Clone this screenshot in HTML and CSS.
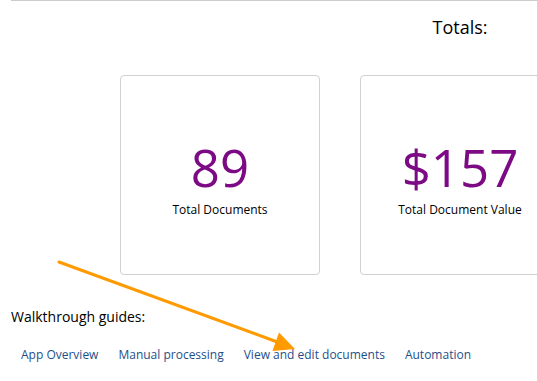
FILE: index.html
```html
<!DOCTYPE html>
<html lang="en">
<head>
    <meta charset="UTF-8">
    <meta name="viewport" content="width=device-width, initial-scale=1.0">
    <title>Dashboard</title>
    <link rel="stylesheet" href="styles.css">
</head>
<body>
    <div class="page">
        <div class="totals">
            <h2 class="totals-title">Totals:</h2>
            <div class="cards">
                <div class="card">
                    <div class="card-value">89</div>
                    <div class="card-label">Total Documents</div>
                </div>
                <div class="card">
                    <div class="card-value">$157</div>
                    <div class="card-label">Total Document Value</div>
                </div>
            </div>
        </div>

        <div class="guides">
            <h3 class="guides-title">Walkthrough guides:</h3>
            <div class="guide-links">
                <a href="#">App Overview</a>
                <a href="#">Manual processing</a>
                <a href="#">View and edit documents</a>
                <a href="#">Automation</a>
            </div>
        </div>
    </div>

    <!-- annotation arrow -->
    <svg class="arrow" width="537" height="381" viewBox="0 0 537 381">
        <line x1="59" y1="262" x2="280" y2="343" stroke="#ff9a00" stroke-width="3" stroke-linecap="round"/>
        <polygon points="295,349 279,332.5 272.5,351" fill="#ff9a00"/>
    </svg>
</body>
</html>
```

FILE: styles.css
```css
html {
    overflow: hidden;
}
body {
    margin: 0;
    font-family: "Open Sans", Arial, sans-serif;
    color: #000;
    background: #fff;
}
.page {
    width: 898px;
    padding-left: 11px;
}
.totals {
    border-top: 1px solid #ccc;
}
.totals-title {
    margin: 14px 0 0;
    font-size: 18px;
    font-weight: normal;
    line-height: 24px;
    text-align: center;
}
.cards {
    display: flex;
    gap: 40px;
    margin-top: 36px;
    padding-left: 109px;
}
.card {
    width: 198px;
    height: 198px;
    border: 1px solid #d0d0d0;
    border-radius: 4px;
    text-align: center;
}
.card-value {
    margin-top: 61px;
    font-size: 51px;
    line-height: 60px;
    color: #7d0a85;
}
.card-label {
    margin-top: 5px;
    font-size: 12px;
    line-height: 16px;
}
.guides {
    margin-top: 32px;
}
.guides-title {
    margin: 0;
    font-size: 14px;
    font-weight: normal;
    line-height: 20px;
}
.guide-links {
    display: flex;
    gap: 20px;
    margin-top: 20px;
    padding-left: 10px;
}
.guide-links a {
    font-size: 12px;
    line-height: 16px;
    color: #1e4f8a;
    text-decoration: none;
}
.arrow {
    position: absolute;
    top: 0;
    left: 0;
    pointer-events: none;
}
```
